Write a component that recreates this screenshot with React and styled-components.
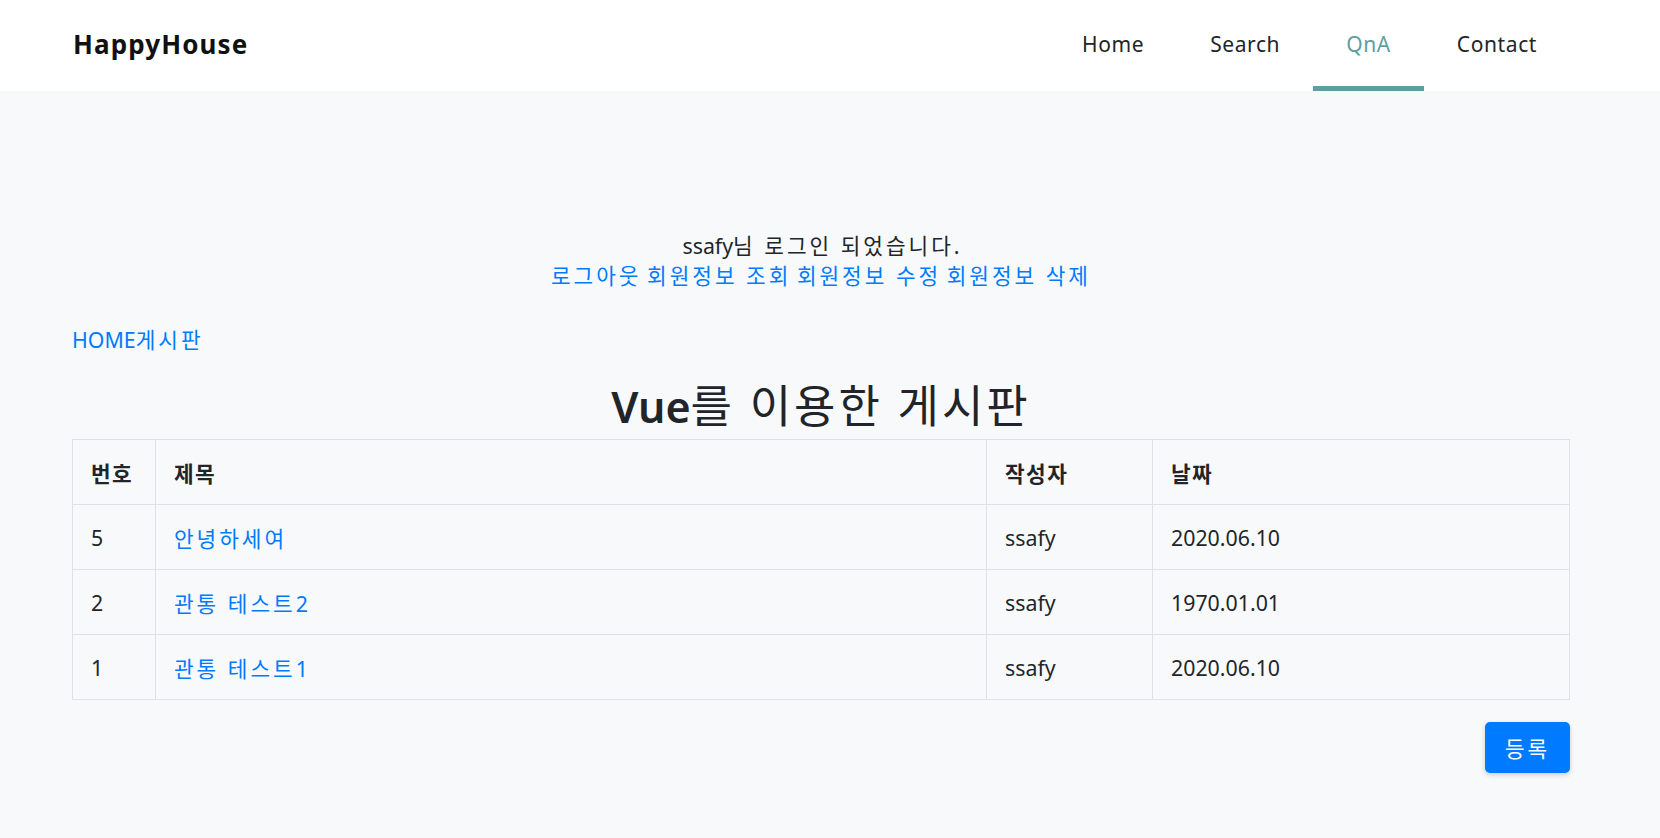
import React from "react";
import styled, { createGlobalStyle } from "styled-components";

const posts = [
  { no: 5, title: "안녕하세여", writer: "ssafy", date: "2020.06.10" },
  { no: 2, title: "관통 테스트2", writer: "ssafy", date: "1970.01.01" },
  { no: 1, title: "관통 테스트1", writer: "ssafy", date: "2020.06.10" },
];

const menu = ["Home", "Search", "QnA", "Contact"];

// hangul runs get wider tracking so they sit like the original font
const Txt = ({ children, gap }) =>
  String(children)
    .split(/([가-힣][가-힣 ]*)/)
    .filter(Boolean)
    .map((part, i) =>
      /[가-힣]/.test(part) ? (
        <Ko key={i} $gap={gap}>
          {part}
        </Ko>
      ) : (
        <React.Fragment key={i}>{part}</React.Fragment>
      )
    );

const App = () => {
  return (
    <Page>
      <GlobalStyle />
      <NavBar>
        <Brand>HappyHouse</Brand>
        <NavList>
          {menu.map((m) => (
            <NavItem key={m} $active={m === "QnA"}>
              {m}
            </NavItem>
          ))}
        </NavList>
      </NavBar>
      <Content>
        <Welcome>
          <div>
            <Txt>ssafy님 로그인 되었습니다.</Txt>
          </div>
          <div>
            <Link><Txt>로그아웃</Txt></Link> <Link><Txt>회원정보 조회</Txt></Link>{" "}
            <Link><Txt>회원정보 수정</Txt></Link> <Link><Txt>회원정보 삭제</Txt></Link>
          </div>
        </Welcome>
        <Crumbs>
          <Link>HOME</Link>
          <Link><Txt>게시판</Txt></Link>
        </Crumbs>
        <Title>
          <Strong>Vue</Strong>
          <Txt gap="3px">를 이용한 게시판</Txt>
        </Title>
        <Table>
          <colgroup>
            <col style={{ width: "83px" }} />
            <col style={{ width: "831px" }} />
            <col style={{ width: "166px" }} />
            <col />
          </colgroup>
          <thead>
            <tr>
              <Th><Txt gap="1.5px">번호</Txt></Th>
              <Th><Txt gap="1.5px">제목</Txt></Th>
              <Th><Txt gap="1.5px">작성자</Txt></Th>
              <Th><Txt gap="1.5px">날짜</Txt></Th>
            </tr>
          </thead>
          <tbody>
            {posts.map((p) => (
              <tr key={p.no}>
                <Td>{p.no}</Td>
                <Td>
                  <Link><Txt>{p.title}</Txt></Link>
                </Td>
                <Td>{p.writer}</Td>
                <Td>{p.date}</Td>
              </tr>
            ))}
          </tbody>
        </Table>
        <Actions>
          <Button><Txt>등록</Txt></Button>
        </Actions>
      </Content>
    </Page>
  );
};

const GlobalStyle = createGlobalStyle`
  body {
    margin: 0;
    background: #f8f9fa;
    font-family: "Noto Sans", "Noto Sans CJK KR", sans-serif;
    color: #212529;
  }
`;

const Page = styled.div`
  min-height: 838px;
  background: #f8f9fa;
  font-size: 21.33px;
`;

const Ko = styled.span`
  letter-spacing: ${(p) => p.$gap || "3px"};
`;

const NavBar = styled.nav`
  height: 91px;
  background: #fff;
  display: flex;
  justify-content: space-between;
  align-items: stretch;
  padding: 0 90px 0 73px;
`;

const Brand = styled.div`
  display: flex;
  align-items: center;
  padding-bottom: 4px;
  font-size: 26px;
  font-weight: 700;
  color: #111;
  letter-spacing: 1.1px;
`;

const NavList = styled.div`
  display: flex;
`;

const NavItem = styled.div`
  display: flex;
  align-items: center;
  padding: 1px 33px 0;
  font-size: 21px;
  letter-spacing: 0.6px;
  color: ${(p) => (p.$active ? "#5f9ea0" : "#212529")};
  border-bottom: 5px solid ${(p) => (p.$active ? "#5f9ea0" : "transparent")};
`;

const Content = styled.main`
  padding: 0 90px 40px 72px;
`;

const Welcome = styled.div`
  margin-top: 140px;
  text-align: center;
  line-height: 30px;
`;

const Link = styled.a`
  color: #007bff;
  text-decoration: none;
  cursor: pointer;
`;

const Crumbs = styled.div`
  margin-top: 33px;
  line-height: 32px;
`;

const Title = styled.h1`
  margin: 23px 0 5px;
  text-align: center;
  font-size: 45px;
  font-weight: 400;
  line-height: 54px;
  color: #212529;
`;

const Strong = styled.span`
  font-weight: 600;
  font-size: 43px;
`;

const Table = styled.table`
  width: 100%;
  border-collapse: collapse;
  table-layout: fixed;
  border: 1px solid #dee2e6;
`;

const Th = styled.th`
  height: 64px;
  padding: 0 17px 0 18px;
  text-align: left;
  font-weight: 700;
  white-space: nowrap;
  border: 1px solid #dee2e6;
`;

const Td = styled.td`
  height: 64px;
  padding: 0 17px 0 18px;
  white-space: nowrap;
  border: 1px solid #dee2e6;
`;

const Actions = styled.div`
  display: flex;
  justify-content: flex-end;
  margin-top: 22px;
`;

const Button = styled.button`
  width: 85px;
  height: 51px;
  border: none;
  border-radius: 5px;
  background: #007bff;
  color: #fff;
  font-family: inherit;
  font-size: 21.33px;
  box-shadow: 0 2px 5px rgba(0, 0, 0, 0.18);
`;

export default App;
